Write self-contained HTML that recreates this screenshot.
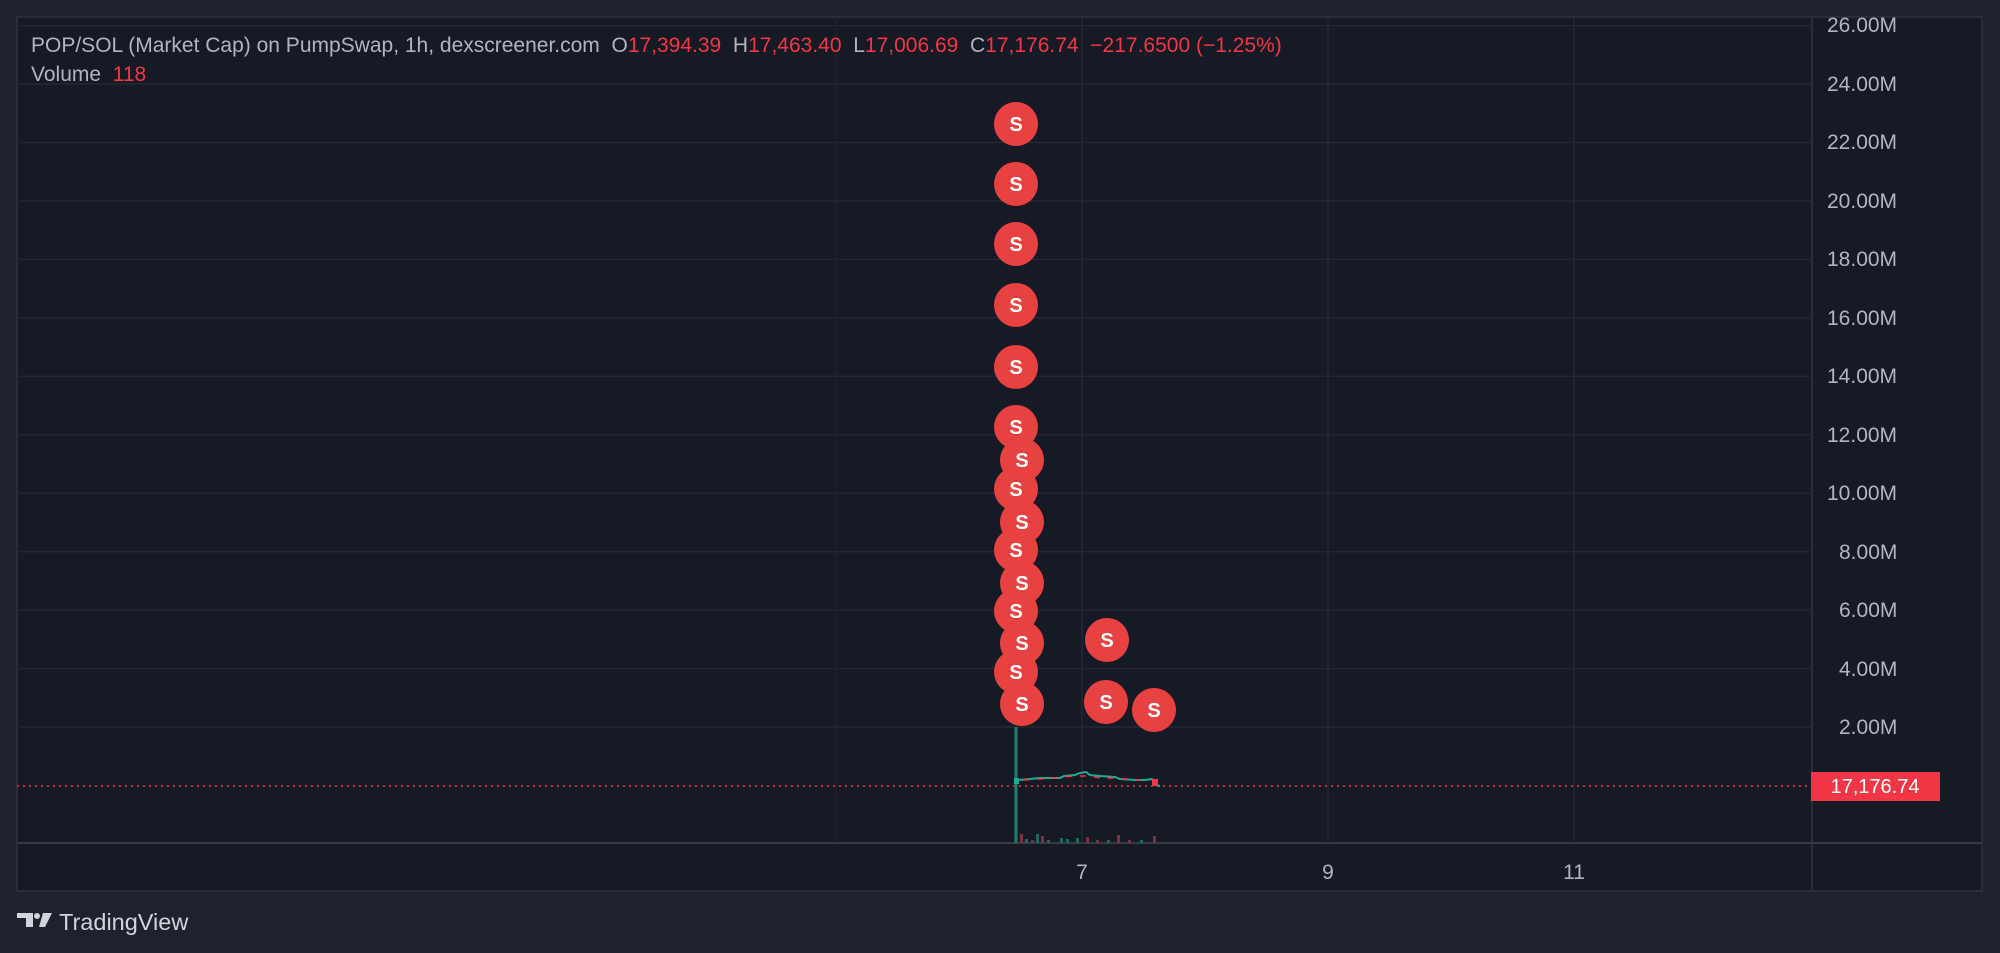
<!DOCTYPE html>
<html><head><meta charset="utf-8"><style>
html,body{margin:0;padding:0;background:#1e222d;width:2000px;height:953px;overflow:hidden;font-family:"Liberation Sans",sans-serif}
svg{position:absolute;left:0;top:0}
text{white-space:pre}
</style></head><body>
<svg width="2000" height="953" xmlns="http://www.w3.org/2000/svg" font-family="Liberation Sans, sans-serif">
<rect x="17" y="17" width="1965" height="874" fill="#161a25" stroke="#2a2e39" stroke-width="2"/>
<line x1="1812" y1="17" x2="1812" y2="891" stroke="#2a2e39" stroke-width="2"/>
<line x1="17" y1="843" x2="1982" y2="843" stroke="#363a45" stroke-width="2"/>
<g stroke="#232733" stroke-width="1.5">
<line x1="17" y1="25.6" x2="1812" y2="25.6"/><line x1="17" y1="84" x2="1812" y2="84"/><line x1="17" y1="142.5" x2="1812" y2="142.5"/><line x1="17" y1="201" x2="1812" y2="201"/><line x1="17" y1="259.4" x2="1812" y2="259.4"/><line x1="17" y1="317.9" x2="1812" y2="317.9"/><line x1="17" y1="376.3" x2="1812" y2="376.3"/><line x1="17" y1="434.8" x2="1812" y2="434.8"/><line x1="17" y1="493.2" x2="1812" y2="493.2"/><line x1="17" y1="551.7" x2="1812" y2="551.7"/><line x1="17" y1="610.1" x2="1812" y2="610.1"/><line x1="17" y1="668.6" x2="1812" y2="668.6"/><line x1="17" y1="727" x2="1812" y2="727"/>
<line x1="1082" y1="17" x2="1082" y2="843"/><line x1="1328" y1="17" x2="1328" y2="843"/><line x1="1574" y1="17" x2="1574" y2="843"/>
</g>
<line x1="836" y1="17" x2="836" y2="843" stroke="#1d212c" stroke-width="1.5"/>
<g fill="#b2b5be" font-size="21">
<text x="1827" y="32">26.00M</text><text x="1827" y="91">24.00M</text><text x="1827" y="149">22.00M</text><text x="1827" y="208">20.00M</text><text x="1827" y="266">18.00M</text><text x="1827" y="325">16.00M</text><text x="1827" y="383">14.00M</text><text x="1827" y="442">12.00M</text><text x="1827" y="500">10.00M</text><text x="1839" y="559">8.00M</text><text x="1839" y="617">6.00M</text><text x="1839" y="676">4.00M</text><text x="1839" y="734">2.00M</text>
<text x="1082" y="879" text-anchor="middle">7</text><text x="1328" y="879" text-anchor="middle">9</text><text x="1574" y="879" text-anchor="middle">11</text>
</g>
<line x1="17" y1="786" x2="1812" y2="786" stroke="#f23645" stroke-width="1.5" stroke-dasharray="2,4"/>
<rect x="1811" y="772" width="129" height="29" fill="#f23645"/>
<text x="1875" y="793" fill="#fff" font-size="20" text-anchor="middle">17,176.74</text>
<line x1="1016" y1="727" x2="1016" y2="843" stroke="#1e7f6e" stroke-width="3"/>
<rect x="1014" y="778" width="5" height="6" fill="#22ab94"/>
<polyline points="1019,780 1030,779 1040,778 1060,778 1064,776 1075,775 1080,773 1086,772 1090,775 1100,776 1115,777 1120,779 1135,780 1145,780 1152,779 1155,785 1160,786" fill="none" stroke="#22ab94" stroke-width="2"/>
<polyline points="1024,780 1040,779 1075,776 1090,776 1100,778 1115,778 1135,780 1150,780" fill="none" stroke="#f23645" stroke-width="1.5" stroke-dasharray="6,8"/>
<rect x="1152" y="779" width="6" height="7" fill="#f23645"/>
<g fill="#7a3340"><rect x="1020" y="834" width="3" height="9"/><rect x="1041" y="836" width="3" height="7"/><rect x="1086" y="837" width="3" height="6"/><rect x="1117" y="835" width="3" height="8"/><rect x="1153" y="836" width="3" height="7"/><rect x="1031" y="840" width="3" height="3"/><rect x="1096" y="840" width="3" height="3"/><rect x="1128" y="840" width="3" height="3"/></g>
<g fill="#1e6a5f"><rect x="1025" y="839" width="3" height="4"/><rect x="1036" y="834" width="3" height="9"/><rect x="1060" y="838" width="3" height="5"/><rect x="1076" y="838" width="3" height="5"/><rect x="1140" y="840" width="3" height="3"/><rect x="1047" y="840" width="3" height="3"/><rect x="1066" y="839" width="3" height="4"/><rect x="1107" y="840" width="3" height="3"/></g>
<g fill="#e84142">
<circle cx="1016" cy="124" r="22"/><circle cx="1016" cy="184" r="22"/><circle cx="1016" cy="244" r="22"/><circle cx="1016" cy="305" r="22"/><circle cx="1016" cy="367" r="22"/><circle cx="1016" cy="427" r="22"/><circle cx="1016" cy="489" r="22"/><circle cx="1016" cy="550" r="22"/><circle cx="1016" cy="611" r="22"/><circle cx="1016" cy="672" r="22"/>
<circle cx="1022" cy="460" r="22"/><circle cx="1022" cy="522" r="22"/><circle cx="1022" cy="583" r="22"/><circle cx="1022" cy="643" r="22"/><circle cx="1022" cy="704" r="22"/>
<circle cx="1107" cy="640" r="22"/><circle cx="1106" cy="702" r="22"/><circle cx="1154" cy="710" r="22"/>
</g>
<g fill="#fff" font-size="20" font-weight="bold" text-anchor="middle">
<text x="1016" y="131">S</text><text x="1016" y="191">S</text><text x="1016" y="251">S</text><text x="1016" y="312">S</text><text x="1016" y="374">S</text><text x="1016" y="434">S</text><text x="1016" y="496">S</text><text x="1016" y="557">S</text><text x="1016" y="618">S</text><text x="1016" y="679">S</text>
<text x="1022" y="467">S</text><text x="1022" y="529">S</text><text x="1022" y="590">S</text><text x="1022" y="650">S</text><text x="1022" y="711">S</text>
<text x="1107" y="647">S</text><text x="1106" y="709">S</text><text x="1154" y="717">S</text>
</g>
<text x="31" y="52" font-size="21" fill="#b2b5be">POP/SOL (Market Cap) on PumpSwap, 1h, dexscreener.com  O<tspan fill="#f23645">17,394.39</tspan>  H<tspan fill="#f23645">17,463.40</tspan>  L<tspan fill="#f23645">17,006.69</tspan>  C<tspan fill="#f23645">17,176.74</tspan>  <tspan fill="#f23645">−217.6500 (−1.25%)</tspan></text>
<text x="31" y="81" font-size="21" fill="#b2b5be">Volume  <tspan fill="#f23645">118</tspan></text>
<g fill="#d1d4dc">
<path d="M17 913h16v14h-7v-9h-9z"/><circle cx="37" cy="916" r="3"/><path d="M43 913h9l-7 14h-6z"/>
</g>
<text x="59" y="930" font-size="23.5" fill="#d1d4dc">TradingView</text>
</svg>
</body></html>
